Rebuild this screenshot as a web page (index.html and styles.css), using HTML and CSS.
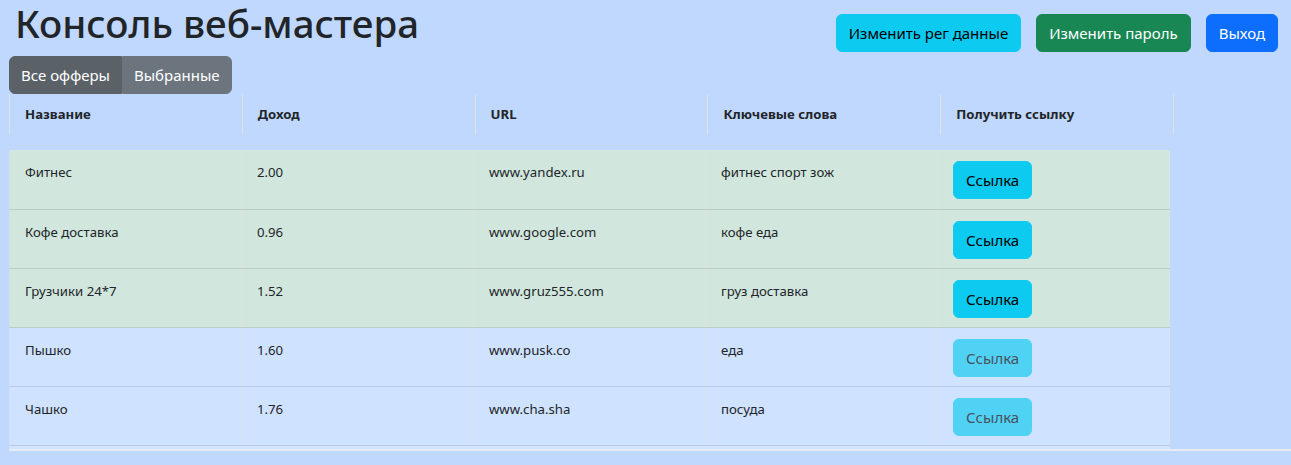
FILE: index.html
```html
<!DOCTYPE html>
<html lang="ru">
<head>
<meta charset="utf-8">
<title>Консоль веб-мастера</title>
<link rel="stylesheet" href="styles.css">
</head>
<body>
<div class="page">
  <header class="top">
    <h1 class="title">Консоль веб-мастера</h1>
    <div class="actions">
      <button class="btn btn-info">Изменить рег данные</button>
      <button class="btn btn-success">Изменить пароль</button>
      <button class="btn btn-primary">Выход</button>
    </div>
  </header>
  <div class="btn-group">
    <button class="btn btn-secondary active">Все офферы</button>
    <button class="btn btn-secondary">Выбранные</button>
  </div>
  <table class="head-table">
    <tr>
      <th>Название</th>
      <th>Доход</th>
      <th>URL</th>
      <th>Ключевые слова</th>
      <th>Получить ссылку</th>
    </tr>
  </table>
  <div class="spacer"></div>
  <table class="body-table">
    <tr class="row-success">
      <td>Фитнес</td><td>2.00</td><td>www.yandex.ru</td><td>фитнес спорт зож</td>
      <td class="link-cell"><button class="btn btn-info">Ссылка</button></td>
    </tr>
    <tr class="row-success">
      <td>Кофе доставка</td><td>0.96</td><td>www.google.com</td><td>кофе еда</td>
      <td class="link-cell"><button class="btn btn-info">Ссылка</button></td>
    </tr>
    <tr class="row-success">
      <td>Грузчики 24*7</td><td>1.52</td><td>www.gruz555.com</td><td>груз доставка</td>
      <td class="link-cell"><button class="btn btn-info">Ссылка</button></td>
    </tr>
    <tr class="row-primary">
      <td>Пышко</td><td>1.60</td><td>www.pusk.co</td><td>еда</td>
      <td class="link-cell"><button class="btn btn-info" disabled>Ссылка</button></td>
    </tr>
    <tr class="row-primary">
      <td>Чашко</td><td>1.76</td><td>www.cha.sha</td><td>посуда</td>
      <td class="link-cell"><button class="btn btn-info" disabled>Ссылка</button></td>
    </tr>
  </table>
  <div class="tail"></div>
  <div class="bottom-line"></div>
</div>
</body>
</html>
```
FILE: styles.css
```css
* { box-sizing: border-box; }
html, body {
  margin: 0;
  background: #c0d8fd;
  font-family: "Noto Sans", "Open Sans", sans-serif;
  color: #212529;
}
.page {
  padding-left: 9px;
}
.top {
  display: flex;
  justify-content: space-between;
  align-items: flex-start;
  height: 56px;
}
.title {
  margin: 0 0 0 6px;
  font-size: 38.5px;
  line-height: 46px;
  font-weight: 500;
}
.actions {
  display: flex;
  gap: 15px;
  margin-top: 14px;
  margin-right: 13px;
}
.btn {
  font-family: inherit;
  font-size: 15px;
  line-height: 24px;
  padding: 6px 12px;
  border: 1px solid transparent;
  border-radius: 6px;
  cursor: pointer;
}
.btn-info { background: #0dcaf0; border-color: #0dcaf0; color: #000; }
.btn-success { background: #198754; border-color: #198754; color: #fff; }
.btn-primary { background: #0d6efd; border-color: #0d6efd; color: #fff; }
.btn-secondary { background: #6c757d; border-color: #6c757d; color: #fff; }
.btn-secondary.active { background: #5a6268; border-color: #5a6268; }
.btn:disabled { opacity: .65; cursor: default; }

.btn-group {
  display: inline-flex;
  vertical-align: top;
}
.btn-group .btn { padding: 6px 11px; }
.btn-group .btn:first-child { border-radius: 6px 0 0 6px; }
.btn-group .btn:last-child { border-radius: 0 6px 6px 0; }

.head-table, .body-table {
  border-collapse: collapse;
  table-layout: fixed;
  font-size: 13.2px;
}
.head-table { width: 1165px; }
.head-table th {
  height: 40px;
  padding: 0 15px;
  text-align: left;
  font-weight: 700;
  border-left: 1px solid #dee2e6;
  border-right: 1px solid #dee2e6;
  vertical-align: middle;
}
.spacer { height: 16px; }
.body-table { width: 1161px; }
.body-table td {
  height: 59px;
  padding: 12px 15px 0 15px;
  vertical-align: top;
  line-height: 21px;
  border-left: 1px solid rgba(222, 226, 230, .7);
  border-right: 1px solid rgba(222, 226, 230, .7);
}
.body-table .link-cell { padding-top: 11px; }
.row-success td { background: #d1e7dd; border-bottom: 1px solid #bccdc5; }
.row-primary td { background: #cfe2ff; border-bottom: 1px solid #b9cbe8; }
.tail {
  width: 1161px;
  height: 3px;
  background: #d3e4fd;
  border-left: 1px solid #dee2e6;
  border-right: 1px solid #dee2e6;
}
.bottom-line {
  height: 2px;
  background: #e6ecf5;
}
```
